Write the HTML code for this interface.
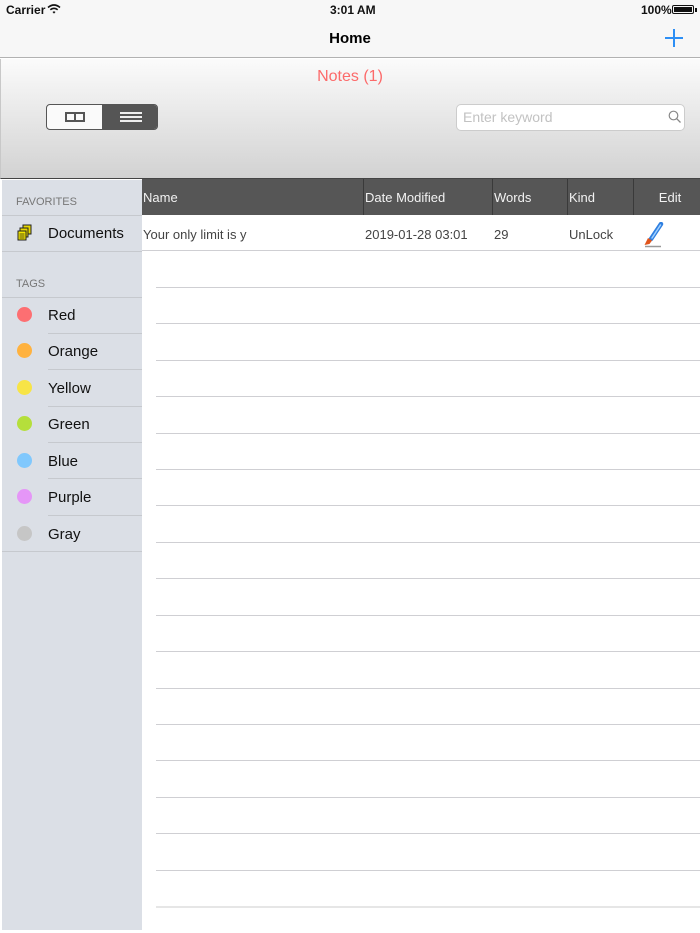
<!DOCTYPE html>
<html><head><style>
*{margin:0;padding:0;box-sizing:border-box}
body{width:700px;height:933px;position:relative;background:#fff;font-family:"Liberation Sans",Helvetica,sans-serif;overflow:hidden}
.a{position:absolute}
.hl{position:absolute;left:156px;right:0;height:1px;background:#cfcfd3}
.th{position:absolute;top:179px;height:36px;line-height:37px;color:#f2f2f2;font-size:13px;background:#565656}
.sd{position:absolute;left:0;width:142px;height:1px;background:#c6c9ce}
.tag{position:absolute;left:48px;font-size:15px;color:#111}
.dot{position:absolute;left:17px;width:15px;height:15px;border-radius:50%}
</style></head><body>
<div class="a" style="left:0;top:0;width:700px;height:58px;background:#f7f7f7;border-bottom:1px solid #b2b2b2"></div>
<div class="a" style="left:6px;top:3px;font-size:12px;font-weight:bold;color:#111">Carrier</div>
<svg class="a" style="left:47px;top:4px" width="14" height="10" viewBox="0 0 14 10"><path d="M1 3.5Q7 -1.5 13 3.5" stroke="#111" stroke-width="1.6" fill="none"/><path d="M3.3 5.8Q7 2.8 10.7 5.8" stroke="#111" stroke-width="1.6" fill="none"/><path d="M5.5 8Q7 6.8 8.5 8L7 9.6Z" fill="#111"/></svg>
<div class="a" style="left:330px;top:3px;font-size:12px;font-weight:bold;color:#111">3:01 AM</div>
<div class="a" style="left:641px;top:3px;font-size:12px;font-weight:bold;color:#111">100%</div>
<div class="a" style="left:672px;top:5px;width:22px;height:9px;border:1px solid #111;border-radius:2px;padding:1px"><div style="width:100%;height:100%;background:#111"></div></div>
<div class="a" style="left:695px;top:8px;width:2px;height:4px;background:#111"></div>
<div class="a" style="left:0;width:700px;top:30px;text-align:center;font-size:15px;font-weight:bold;color:#000">Home</div>
<div class="a" style="left:665px;top:37px;width:18px;height:1.5px;background:#2d8ff5"></div>
<div class="a" style="left:673px;top:29px;width:1.5px;height:18px;background:#2d8ff5"></div>
<div class="a" style="left:0;top:59px;width:700px;height:120px;background:linear-gradient(#fbfbfb,#d2d2d2);border-left:1px solid #c8c8c8;border-bottom:1px solid #444"></div>
<div class="a" style="left:0;width:700px;top:68px;text-align:center;font-size:16px;color:#fc6a6a">Notes (1)</div>
<div class="a" style="left:46px;top:104px;width:112px;height:26px;border:1px solid #555;border-radius:4px;background:#fafafa;overflow:hidden">
<div class="a" style="left:55px;top:0;width:56px;height:24px;background:#555"></div>
<div class="a" style="left:18px;top:7px;width:20px;height:10px;border:2px solid #555"></div>
<div class="a" style="left:27px;top:7px;width:2px;height:10px;background:#555"></div>
<div class="a" style="left:73px;top:7px;width:22px;height:2px;background:#eee"></div>
<div class="a" style="left:73px;top:11px;width:22px;height:2px;background:#eee"></div>
<div class="a" style="left:73px;top:15px;width:22px;height:2px;background:#eee"></div>
</div>
<div class="a" style="left:456px;top:104px;width:229px;height:27px;background:#fff;border:1px solid #ccc;border-radius:5px"></div>
<div class="a" style="left:463px;top:109px;font-size:14px;color:#c2c2c2">Enter keyword</div>
<svg class="a" style="left:668px;top:110px" width="14" height="14" viewBox="0 0 14 14"><circle cx="5.5" cy="5.5" r="4.3" stroke="#888" stroke-width="1.2" fill="none"/><path d="M8.6 8.6L12.5 12.5" stroke="#888" stroke-width="1.3"/></svg>
<div class="a" style="left:2px;top:180px;width:140px;height:750px;background:#dbdfe6"></div>
<div class="a" style="left:16px;top:196px;font-size:11px;color:#777">FAVORITES</div>
<div class="sd" style="top:215px;left:2px;width:140px"></div>
<svg class="a" style="left:17px;top:224px" width="16" height="17" viewBox="0 0 16 17"><rect x="6" y="1" width="8" height="9" fill="#e8d800" stroke="#222"/><rect x="3" y="4" width="8" height="9" fill="#e8d800" stroke="#222"/><rect x="1" y="7" width="8" height="9" fill="#f4e600" stroke="#222"/><path d="M2.5 10h5M2.5 12h5M2.5 14h5" stroke="#222" stroke-width=".8"/></svg>
<div class="tag" style="top:225px">Documents</div>
<div class="sd" style="top:251px;left:2px;width:140px"></div>
<div class="a" style="left:16px;top:278px;font-size:11px;color:#777">TAGS</div>
<div class="sd" style="top:297px;left:2px;width:140px"></div>
<div class="dot" style="top:307px;background:#fd6f72"></div><div class="tag" style="top:307px">Red</div>
<div class="sd" style="top:333px;left:48px;width:94px"></div>
<div class="dot" style="top:343px;background:#ffb23f"></div><div class="tag" style="top:343px">Orange</div>
<div class="sd" style="top:369px;left:48px;width:94px"></div>
<div class="dot" style="top:380px;background:#f7e446"></div><div class="tag" style="top:380px">Yellow</div>
<div class="sd" style="top:406px;left:48px;width:94px"></div>
<div class="dot" style="top:416px;background:#b5df3b"></div><div class="tag" style="top:416px">Green</div>
<div class="sd" style="top:442px;left:48px;width:94px"></div>
<div class="dot" style="top:453px;background:#80c8fd"></div><div class="tag" style="top:453px">Blue</div>
<div class="sd" style="top:478px;left:48px;width:94px"></div>
<div class="dot" style="top:489px;background:#e596f7"></div><div class="tag" style="top:489px">Purple</div>
<div class="sd" style="top:515px;left:48px;width:94px"></div>
<div class="dot" style="top:526px;background:#c6c6c6"></div><div class="tag" style="top:526px">Gray</div>
<div class="sd" style="top:551px;left:2px;width:140px"></div>
<div class="th" style="left:142px;width:221px;padding-left:1px">Name</div>
<div class="th" style="left:364px;width:128px;padding-left:1px">Date Modified</div>
<div class="th" style="left:493px;width:74px;padding-left:1px">Words</div>
<div class="th" style="left:568px;width:65px;padding-left:1px">Kind</div>
<div class="th" style="left:634px;width:66px;text-align:center;padding-left:6px">Edit</div>
<div class="a" style="left:363px;top:179px;width:1px;height:36px;background:#3a3a3a"></div>
<div class="a" style="left:492px;top:179px;width:1px;height:36px;background:#3a3a3a"></div>
<div class="a" style="left:567px;top:179px;width:1px;height:36px;background:#3a3a3a"></div>
<div class="a" style="left:633px;top:179px;width:1px;height:36px;background:#3a3a3a"></div>
<div class="a" style="left:143px;top:227px;font-size:13px;color:#444">Your only limit is y</div>
<div class="a" style="left:365px;top:227px;font-size:13px;color:#444">2019-01-28 03:01</div>
<div class="a" style="left:494px;top:227px;font-size:13px;color:#444">29</div>
<div class="a" style="left:569px;top:227px;font-size:13px;color:#444">UnLock</div>
<svg class="a" style="left:642px;top:222px" width="22" height="26" viewBox="0 0 22 26"><path d="M19 2L9 17" stroke="#2f7fe0" stroke-width="4.5" stroke-linecap="round"/><path d="M18.5 3L10 16" stroke="#9fd0ff" stroke-width="1.5" stroke-linecap="round"/><path d="M6 16l4 2.5-2.5 3.5-5 1z" fill="#e0541b"/><path d="M3 24.5h16" stroke="#999" stroke-width="1.5"/></svg>
<div class="hl" style="top:250px;left:142px;right:0"></div>
<div class="hl" style="top:287px"></div><div class="hl" style="top:323px"></div><div class="hl" style="top:360px"></div>
<div class="hl" style="top:396px"></div><div class="hl" style="top:433px"></div><div class="hl" style="top:469px"></div>
<div class="hl" style="top:505px"></div><div class="hl" style="top:542px"></div><div class="hl" style="top:578px"></div>
<div class="hl" style="top:615px"></div><div class="hl" style="top:651px"></div><div class="hl" style="top:688px"></div>
<div class="hl" style="top:724px"></div><div class="hl" style="top:760px"></div><div class="hl" style="top:797px"></div>
<div class="hl" style="top:833px"></div><div class="hl" style="top:870px"></div><div class="hl" style="top:906px;background:#e6e6e6;height:2px"></div>
</body></html>
